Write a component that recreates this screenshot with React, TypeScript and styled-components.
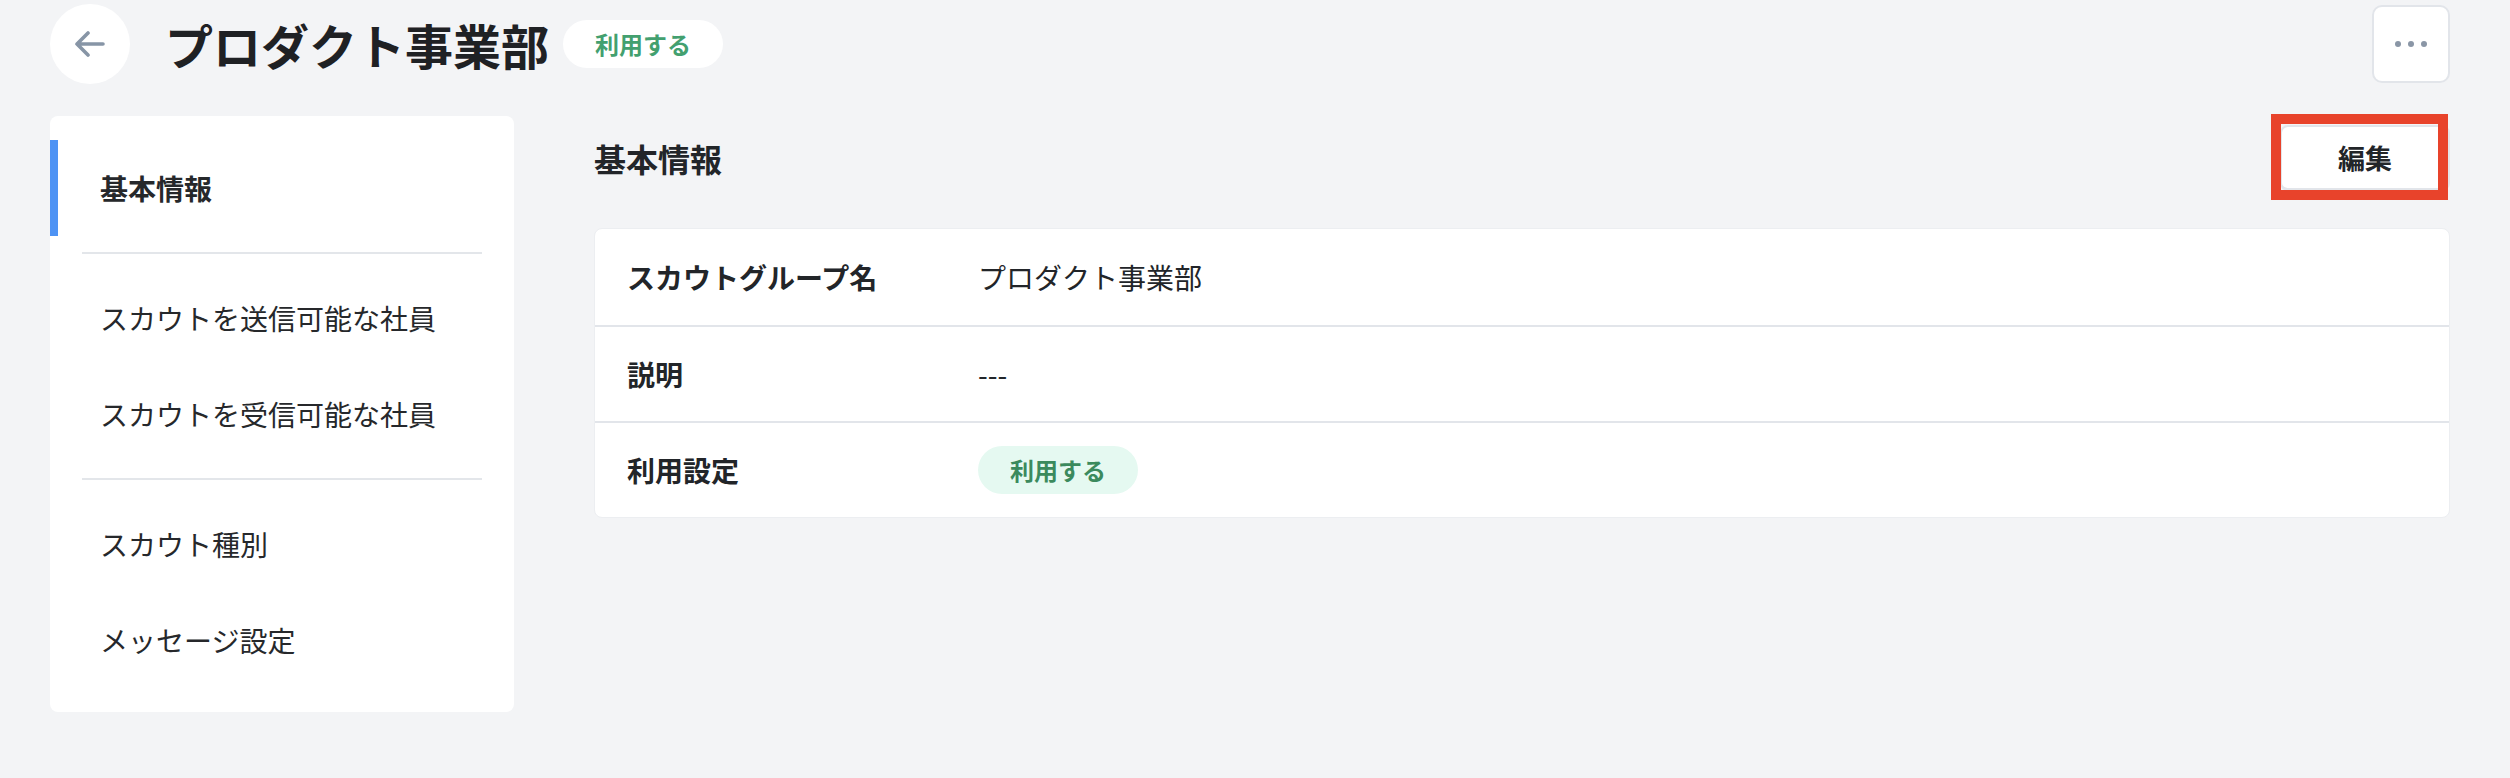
import React from "react";
import styled, { createGlobalStyle } from "styled-components";

const Global = createGlobalStyle`
  html, body {
    margin: 0;
    padding: 0;
    background: #f3f4f6;
  }
  body {
    font-family: "Noto Sans CJK JP", "Noto Sans", sans-serif;
    color: #222529;
  }
  * { box-sizing: border-box; }
`;

const Page = styled.div`
  width: 2510px;
  min-height: 778px;
  padding: 4px 60px 0 50px;
  background: #f3f4f6;
`;

const Header = styled.header`
  display: flex;
  align-items: center;
  height: 80px;
`;

const BackButton = styled.button`
  width: 80px;
  height: 80px;
  border-radius: 50%;
  border: none;
  background: #ffffff;
  display: flex;
  align-items: center;
  justify-content: center;
  padding: 0;
  margin-right: 35px;
  cursor: pointer;
`;

const Title = styled.h1`
  margin: 0;
  font-size: 48px;
  font-weight: 700;
  line-height: 1;
  color: #1f2124;
  margin-right: 14px;
  letter-spacing: 0;
`;

const Badge = styled.span<{ $variant: "white" | "mint" }>`
  display: inline-flex;
  align-items: center;
  justify-content: center;
  height: 48px;
  padding: 0 32px;
  border-radius: 24px;
  font-size: 24px;
  font-weight: 700;
  line-height: 1;
  background: ${(p) => (p.$variant === "white" ? "#ffffff" : "#e5f9f1")};
  color: ${(p) => (p.$variant === "white" ? "#43a06f" : "#3b8a5d")};
`;

const Spacer = styled.div`
  flex: 1;
`;

const MoreButton = styled.button`
  width: 78px;
  height: 78px;
  border-radius: 10px;
  border: 2px solid #e2e5ea;
  background: #ffffff;
  display: flex;
  align-items: center;
  justify-content: center;
  gap: 7px;
  padding: 0;
`;

const Dot = styled.span`
  width: 6px;
  height: 6px;
  border-radius: 50%;
  background: #8a96a6;
`;

const Body = styled.div`
  display: flex;
  align-items: flex-start;
  gap: 80px;
  margin-top: 32px;
`;

const SideNav = styled.nav`
  width: 464px;
  flex-shrink: 0;
  background: #ffffff;
  border-radius: 8px;
  padding: 24px 0 24px;
`;

const NavItem = styled.div<{ $active?: boolean }>`
  position: relative;
  height: 96px;
  display: flex;
  align-items: center;
  padding-left: 50px;
  font-size: 28px;
  line-height: 1;
  font-weight: ${(p) => (p.$active ? 700 : 400)};
  color: #26282b;
  &::before {
    content: "";
    display: ${(p) => (p.$active ? "block" : "none")};
    position: absolute;
    left: 0;
    top: 0;
    bottom: 0;
    width: 8px;
    background: #4e93f4;
  }
`;

const NavDivider = styled.hr`
  margin: 16px 32px 16px;
  border: none;
  height: 2px;
  background: #e3e6ea;
`;

const Main = styled.section`
  flex: 1;
  min-width: 0;
`;

const SectionHeader = styled.div`
  display: flex;
  align-items: center;
  justify-content: space-between;
  height: 80px;
`;

const SectionTitle = styled.h2`
  margin: 0;
  font-size: 32px;
  font-weight: 700;
  line-height: 1;
  color: #222529;
  padding-top: 4px;
`;

const EditWrap = styled.div`
  position: relative;
  margin-top: 4px;
`;

const EditButton = styled.button`
  width: 170px;
  height: 66px;
  border: 2px solid #e2e5ea;
  border-bottom-width: 3px;
  border-radius: 8px;
  background: #ffffff;
  font-family: inherit;
  font-size: 27px;
  font-weight: 700;
  color: #222529;
  line-height: 1;
  padding: 0;
`;

const Highlight = styled.div`
  position: absolute;
  left: -9px;
  right: 2px;
  top: -11px;
  bottom: -9px;
  border: 10px solid #e8432b;
  pointer-events: none;
`;

const InfoCard = styled.div`
  margin-top: 32px;
  background: #ffffff;
  border: 1px solid #eceef1;
  border-radius: 8px;
  overflow: hidden;
`;

const Row = styled.div`
  display: grid;
  grid-template-columns: 353px 1fr;
  align-items: center;
  height: 96px;
  padding-left: 32px;
  & + & {
    border-top: 2px solid #e2e5ea;
  }
`;

const Label = styled.div`
  font-size: 28px;
  font-weight: 700;
  line-height: 1;
  color: #222529;
`;

const Value = styled.div`
  font-size: 28px;
  font-weight: 400;
  line-height: 1;
  color: #222529;
  margin-left: -2px;
`;

const ArrowLeft = () => (
  <svg width="30" height="26" viewBox="0 0 30 26" fill="none">
    <path
      d="M13 2 L2 13 L13 24 M2 13 H28"
      stroke="#8795a6"
      strokeWidth="3.6"
      strokeLinecap="round"
      strokeLinejoin="round"
    />
  </svg>
);

export default function App() {
  return (
    <>
      <Global />
      <Page>
        <Header>
          <BackButton aria-label="戻る">
            <ArrowLeft />
          </BackButton>
          <Title>プロダクト事業部</Title>
          <Badge $variant="white">利用する</Badge>
          <Spacer />
          <MoreButton aria-label="その他">
            <Dot />
            <Dot />
            <Dot />
          </MoreButton>
        </Header>
        <Body>
          <SideNav>
            <NavItem $active>基本情報</NavItem>
            <NavDivider />
            <NavItem>スカウトを送信可能な社員</NavItem>
            <NavItem>スカウトを受信可能な社員</NavItem>
            <NavDivider />
            <NavItem>スカウト種別</NavItem>
            <NavItem>メッセージ設定</NavItem>
          </SideNav>
          <Main>
            <SectionHeader>
              <SectionTitle>基本情報</SectionTitle>
              <EditWrap>
                <EditButton>編集</EditButton>
                <Highlight />
              </EditWrap>
            </SectionHeader>
            <InfoCard>
              <Row>
                <Label>スカウトグループ名</Label>
                <Value>プロダクト事業部</Value>
              </Row>
              <Row>
                <Label>説明</Label>
                <Value>---</Value>
              </Row>
              <Row>
                <Label>利用設定</Label>
                <Value>
                  <Badge $variant="mint">利用する</Badge>
                </Value>
              </Row>
            </InfoCard>
          </Main>
        </Body>
      </Page>
    </>
  );
}
